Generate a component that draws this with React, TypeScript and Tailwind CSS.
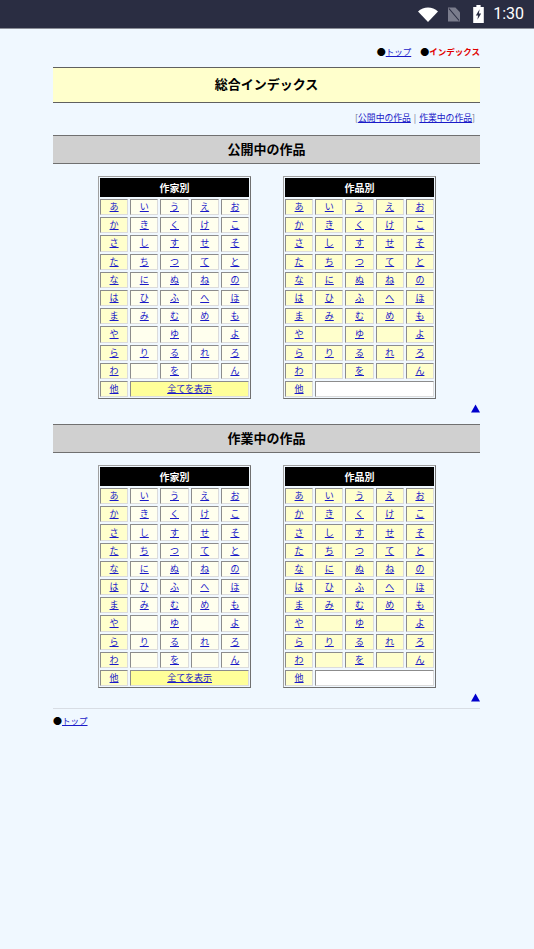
const font = { fontFamily: '"Noto Sans CJK JP", "Liberation Sans", sans-serif' };

const KANA = [
  ["あ", "い", "う", "え", "お"],
  ["か", "き", "く", "け", "こ"],
  ["さ", "し", "す", "せ", "そ"],
  ["た", "ち", "つ", "て", "と"],
  ["な", "に", "ぬ", "ね", "の"],
  ["は", "ひ", "ふ", "へ", "ほ"],
  ["ま", "み", "む", "め", "も"],
  ["や", "", "ゆ", "", "よ"],
  ["ら", "り", "る", "れ", "ろ"],
  ["わ", "", "を", "", "ん"],
];

const cellBorder = "pb-px border border-t-[#8c8c8c] border-l-[#8c8c8c] border-r-[#dcdcdc] border-b-[#dcdcdc]";

function KanaLink({ text }: { text: string }) {
  return (
    <a href="#" className="text-[9px] leading-none text-[#1a1ac8] underline">
      {text}
    </a>
  );
}

function IndexTable({ title, byAuthor }: { title: string; byAuthor: boolean }) {
  return (
    <div className="w-[153px] grid grid-cols-5 grid-rows-[19px_repeat(11,16.2px)] gap-[2px] p-px border border-t-[#a0a0a0] border-l-[#a0a0a0] border-r-[#707070] border-b-[#707070] bg-[#f0f8ff]">
      <div className="col-span-5 pb-px bg-black text-white text-[10px] font-bold flex items-center justify-center">
        {title}
      </div>
      {KANA.map((row, r) =>
        row.map((k, c) => (
          <div
            key={`${r}-${c}`}
            className={`${cellBorder} flex items-center justify-center ${
              !byAuthor || c === 0 ? "bg-[#ffffcc]" : "bg-[#ffffee]"
            }`}
          >
            {k && <KanaLink text={k} />}
          </div>
        ))
      )}
      <div className={`${cellBorder} bg-[#ffffcc] flex items-center justify-center`}>
        <KanaLink text="他" />
      </div>
      {byAuthor ? (
        <div className={`${cellBorder} col-span-4 bg-[#ffff99] flex items-center justify-center`}>
          <KanaLink text="全てを表示" />
        </div>
      ) : (
        <div className={`${cellBorder} col-span-4 bg-white`} />
      )}
    </div>
  );
}

function Section({ title }: { title: string }) {
  return (
    <section>
      <h2 className="h-[29px] pb-[2px] bg-[#d0d0d0] border-y border-[#707070] flex items-center justify-center text-[13px] font-bold text-black">
        {title}
      </h2>
      <div className="mt-[12px] pl-px flex justify-center gap-[32px]">
        <IndexTable title="作家別" byAuthor />
        <IndexTable title="作品別" byAuthor={false} />
      </div>
      <div className="mt-[5px] h-[9px] flex justify-end">
        <svg width="9" height="9" viewBox="0 0 9 9">
          <polygon points="4.5,0.5 9,8.5 0,8.5" fill="#0000cc" />
        </svg>
      </div>
    </section>
  );
}

export default function App() {
  return (
    <div className="min-h-screen bg-[#f0f8ff] text-black" style={font}>
      {/* status bar */}
      <div className="h-[29px] bg-[#2a2d42] border-b border-[#8a8d96] flex items-center justify-end pr-[10px] text-white">
        <svg width="20" height="15" viewBox="0 0 20 15" className="mr-[10px]">
          <path d="M0 4.5 C5.5 -1 14.5 -1 20 4.5 L10 15 Z" fill="#fff" />
        </svg>
        <svg width="12" height="15" viewBox="0 0 13 15" className="mr-[13px]">
          <path d="M0 15 V0 H8 L13 5 V15 Z" fill="#7a7c8c" />
          <path d="M1 1 L12 14" stroke="#2a2d42" strokeWidth="1.2" />
        </svg>
        <svg width="11" height="18" viewBox="0 0 10 17" className="mr-[9px]">
          <path d="M3 0 H7 V2 H10 V17 H0 V2 H3 Z" fill="#fff" />
          <path d="M6 4 L2.5 10 H4.6 L4 14 L7.5 8 H5.4 Z" fill="#2a2d42" />
        </svg>
        <span className="text-[16px] leading-none" style={{ fontFamily: "Roboto, sans-serif" }}>
          1:30
        </span>
      </div>

      <div className="pl-[53px] pr-[54px]">
        {/* top nav */}
        <div className="mt-[15px] h-[14px] flex items-center justify-end text-[8.5px] font-bold leading-none">
          <span className="text-[9px]">●</span>
          <a href="#" className="text-[#1a1ac8] font-normal underline">トップ</a>
          <span className="ml-[9px] text-[9px]">●</span>
          <span className="text-[#e00000]">インデックス</span>
        </div>

        <h1 className="mt-[9px] h-[36px] pb-[2px] bg-[#ffffcc] border-y border-[#606060] flex items-center justify-center text-[13px] font-bold">
          総合インデックス
        </h1>

        <div className="mt-[8px] h-[14px] pr-[5px] flex items-center justify-end text-[8.8px] leading-none text-[#707090]">
          [<a href="#" className="text-[#1a1ac8] underline">公開中の作品</a>
          <span className="mx-[3px]">|</span>
          <a href="#" className="text-[#1a1ac8] underline">作業中の作品</a>]
        </div>

        <div className="mt-[10px] flex flex-col gap-[11px]">
          <Section title="公開中の作品" />
          <Section title="作業中の作品" />
        </div>

        <hr className="mt-[6px] border-t border-[#d8dde4]" />

        <div className="mt-[5px] h-[12px] flex items-center text-[8.5px] leading-none">
          <span className="text-[9px]">●</span>
          <a href="#" className="text-[#1a1ac8] underline">トップ</a>
        </div>
      </div>
    </div>
  );
}
